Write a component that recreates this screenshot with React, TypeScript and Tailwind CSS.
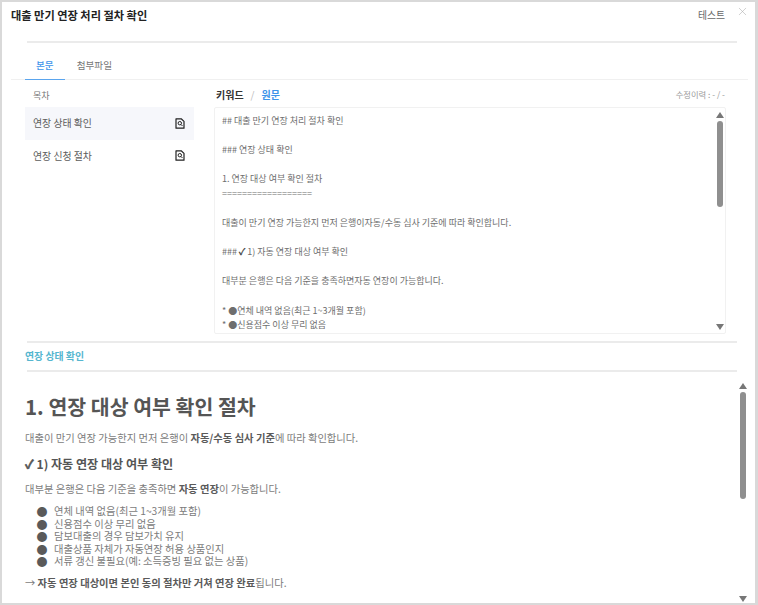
import { X } from 'lucide-react';

const rawBefore = `## 대출 만기 연장 처리 절차 확인

### 연장 상태 확인

1. 연장 대상 여부 확인 절차
==================

대출이 만기 연장 가능한지 먼저 은행이자동/수동 심사 기준에 따라 확인합니다.

### `;

const rawAfter = ` 1) 자동 연장 대상 여부 확인

대부분 은행은 다음 기준을 충족하면자동 연장이 가능합니다.

* ●연체 내역 없음(최근 1~3개월 포함)
* ●신용점수 이상 무리 없음`;

const tocItems = ['연장 상태 확인', '연장 신청 절차'];

const checks = [
  '연체 내역 없음(최근 1~3개월 포함)',
  '신용점수 이상 무리 없음',
  '담보대출의 경우 담보가치 유지',
  '대출상품 자체가 자동연장 허용 상품인지',
  '서류 갱신 불필요(예: 소득증빙 필요 없는 상품)',
];

function DocSearchIcon() {
  return (
    <svg width="10" height="11" viewBox="0 0 10 11" fill="none" stroke="#222" strokeWidth="1.2">
      <path d="M1 .8h5.2L9 3.4v6.8H1z" strokeLinejoin="round" />
      <circle cx="4.8" cy="5.2" r="1.7" strokeWidth="1" />
      <path d="M6 6.5l1.5 1.5" strokeWidth="1" />
    </svg>
  );
}

function ScrollBar({ thumb, top, className }: { thumb: number; top: number; className: string }) {
  return (
    <div className={`flex flex-col items-center ${className}`}>
      <svg width="8" height="6" viewBox="0 0 8 6" className="shrink-0" style={{ marginTop: top }}>
        <path d="M4 0l4 6H0z" fill="#777" />
      </svg>
      <div className="mt-[3px] w-[6px] shrink-0 rounded-full bg-[#8f8f8f]" style={{ height: thumb }} />
      <div className="flex-1" />
      <svg width="8" height="6" viewBox="0 0 8 6" className="shrink-0">
        <path d="M4 6l4-6H0z" fill="#777" />
      </svg>
    </div>
  );
}

export default function App() {
  return (
    <div className="h-[605px] w-[758px] overflow-hidden bg-[#d9d9d9] pb-[2px] pl-[2px] pr-[3px] pt-[2px] font-['Noto_Sans_CJK_KR','Noto_Sans',sans-serif]">
      <div className="relative flex h-full flex-col overflow-hidden bg-white">
        {/* Header */}
        <div className="flex h-[26px] shrink-0 items-center justify-between pl-[9px] pr-[30px]">
          <h1 className="text-[11.2px] font-bold text-[#222]">대출 만기 연장 처리 절차 확인</h1>
          <span className="text-[9.8px] text-[#666]">테스트</span>
        </div>
        <button className="absolute right-[6px] top-[3px] text-[#aaa]">
          <X size={13} strokeWidth={1} />
        </button>
        <div className="ml-[25px] mt-[13px] h-[2px] w-[710px] shrink-0 bg-[#ebebeb]" />

        {/* Tabs */}
        <div className="ml-[9px] flex h-[37px] w-[737px] shrink-0 items-end border-b border-[#f0f0f0] pl-[14px] text-[9.6px]">
          <div className="-mb-px flex h-[28px] items-center border-b border-[#5aa5ee] px-[11px] font-medium text-[#3d94ea]">본문</div>
          <div className="ml-[12px] flex h-[28px] items-center text-[#777]">첨부파일</div>
        </div>

        {/* TOC and raw text */}
        <div className="ml-[23px] flex h-[254px] shrink-0">
          <div className="w-[169px] shrink-0">
            <div className="flex h-[27px] items-center pt-[4px] pl-[8px] text-[9px] text-[#777]">목차</div>
            {tocItems.map((item, i) => (
              <div
                key={item}
                className={`flex h-[32.5px] items-center justify-between pl-[8px] pr-[9px] text-[9.9px] text-[#5c5c5c] ${i === 0 ? 'bg-[#f6f7fb]' : ''}`}
              >
                <span className="pt-[1px]">{item}</span>
                <DocSearchIcon />
              </div>
            ))}
          </div>
          <div className="ml-[20px] w-[512px] shrink-0">
            <div className="flex h-[27px] items-center justify-between pt-[2px] pl-[2px] pr-[1px]">
              <div className="flex items-center text-[10px] font-bold">
                <span className="text-[#333]">키워드</span>
                <span className="mx-[7px] font-normal text-[#bbb]">/</span>
                <span className="text-[#3d94ea]">원문</span>
              </div>
              <span className="text-[8.3px] text-[#999]">수정이력 : - / -</span>
            </div>
            <div className="flex h-[227px] rounded-[2px] border border-[#f1f1f1]">
              <div className="flex-1 overflow-hidden whitespace-pre-wrap pl-[7px] pt-[5.5px] text-[9px] leading-[14.62px] text-[#6e6e6e]">
                {rawBefore}
                <span className="text-[#444] [-webkit-text-stroke:0.4px_#444]">✓</span>
                {rawAfter}
              </div>
              <ScrollBar thumb={86} top={4} className="w-[10px] pb-[3px]" />
            </div>
          </div>
        </div>

        <div className="ml-[25px] mt-[7px] h-[2px] w-[710px] shrink-0 bg-[#ebebeb]" />
        <div className="ml-[23px] flex h-[27px] shrink-0 items-center text-[9.9px] font-bold text-[#55b6cf]">연장 상태 확인</div>
        <div className="ml-[25px] h-[2px] w-[710px] shrink-0 bg-[#ebebeb]" />

        {/* Rendered document */}
        <div className="flex min-h-0 flex-1">
          <div className="flex-1 overflow-hidden pl-[23px] text-[10.3px] text-[#7c7c7c]">
            <h2 className="mt-[21px] text-[20.5px] font-bold leading-[26px] text-[#555]">1. 연장 대상 여부 확인 절차</h2>
            <p className="mt-[11px] leading-[16px]">
              대출이 만기 연장 가능한지 먼저 은행이 <b className="text-[#5a5a5a]">자동/수동 심사 기준</b>에 따라 확인합니다.
            </p>
            <h3 className="mt-[10px] text-[12.1px] font-bold leading-[16px] text-[#555]">
              <span className="[-webkit-text-stroke:0.5px_#555]">✓</span> 1) 자동 연장 대상 여부 확인
            </h3>
            <p className="mt-[9px] leading-[16px]">
              대부분 은행은 다음 기준을 충족하면 <b className="text-[#5a5a5a]">자동 연장</b>이 가능합니다.
            </p>
            <ul className="mt-[8px] pl-[11.5px]">
              {checks.map((item) => (
                <li key={item} className="flex h-[12.5px] items-center text-[10.3px] leading-[12.5px]">
                  <span className="w-[17.5px] text-[11px] text-[#5a5a5a]">●</span>
                  <span>{item}</span>
                </li>
              ))}
            </ul>
            <p className="mt-[7px] leading-[16px]">
              → <b className="text-[#5a5a5a]">자동 연장 대상이면 본인 동의 절차만 거쳐 연장 완료</b>됩니다.
            </p>
          </div>
          <ScrollBar thumb={107} top={11} className="mr-[7px] w-[10px] pb-[1px]" />
        </div>
      </div>
    </div>
  );
}
